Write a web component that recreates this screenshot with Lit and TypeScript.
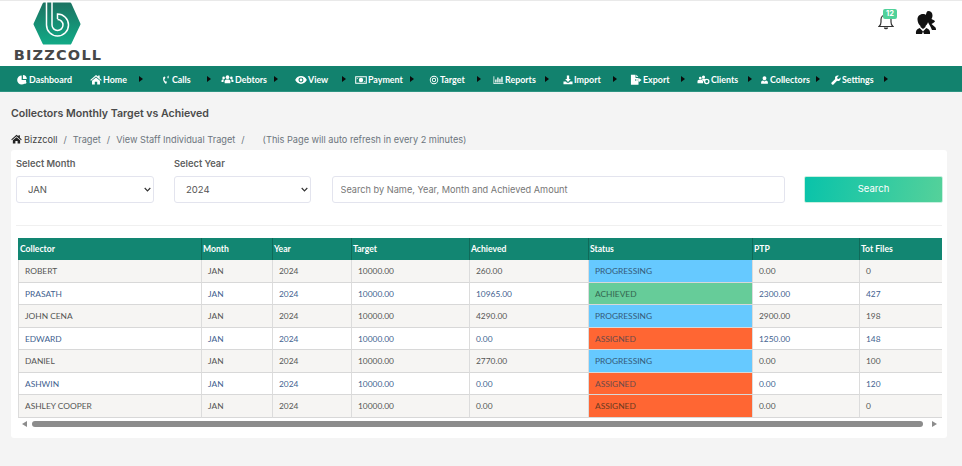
import { LitElement, html, css, svg } from "lit";
import { customElement } from "lit/decorators.js";

const icons: Record<string, unknown> = {
  dashboard: svg`<path d="M5.500 1.200A5.300 5.300 0 1 0 10.800 6.500H5.500Z"/><path d="M7 .6a5 5 0 0 1 4.600 4.600H7Z"/><circle cx="9.500" cy="9.400" r="1.600"/>`,
  home: svg`<path d="M6.500 1 .3 6.400l.8.9L6.500 2.700l5.400 4.600.8-.9-2.200-1.900V1.600H8.800v1.200Z"/><path d="M2.200 7.400 6.500 3.800l4.300 3.600v3.900H7.800V8.400H5.200v2.900h-3Z"/>`,
  phone: svg`<path d="M3.600 1.400 1.800 2.600C.9 5.600 2.400 9.600 4.900 11.800l1.800-.6.2-2.400-1.700-.6-.7.6c-.7-1-1.100-2.400-1.100-3.600l.9-.4L4.900 2.400Z"/><path d="M7.200 1.200h.8v2.600h-.8zM9 .4h.9v3.400H9z"/>`,
  users: svg`<circle cx="6.500" cy="3.400" r="2"/><circle cx="2.300" cy="4.200" r="1.400"/><circle cx="10.700" cy="4.200" r="1.400"/><path d="M3.400 10V7.800c0-1.200 1-1.800 3.100-1.800s3.100.6 3.100 1.800V10Z"/><path d="M0 8.600V7c0-.8.8-1.300 2.800-1.100-.4.5-.6 1.100-.6 1.900v.8ZM13 8.600V7c0-.8-.8-1.300-2.800-1.100.4.5.6 1.100.6 1.900v.8Z"/>`,
  eye: svg`<path fill-rule="evenodd" d="M6.500 2.300C3.700 2.300 1.400 4 .2 6.500c1.200 2.500 3.500 4.200 6.300 4.200s5.100-1.700 6.300-4.200C11.600 4 9.300 2.300 6.500 2.300ZM6.500 3.800a2.700 2.700 0 1 1 0 5.400 2.700 2.700 0 0 1 0-5.400Z"/><circle cx="6.500" cy="6.500" r="1.500"/>`,
  money: svg`<path fill-rule="evenodd" d="M.2 2.400h12.600v8.200H.2ZM1.300 3.500v6h10.400v-6ZM6.500 4.100a2.400 2.400 0 1 1 0 4.800 2.400 2.400 0 0 1 0-4.800ZM2 4.200h1.400L2 5.600ZM11 8.800H9.600L11 7.400Z"/>`,
  target: svg`<path fill-rule="evenodd" d="M6.500 1a5.500 5.500 0 1 1 0 11 5.500 5.500 0 0 1 0-11Zm0 1.200a4.300 4.300 0 1 0 0 8.600 4.300 4.300 0 0 0 0-8.600Zm0 1.500a2.800 2.800 0 1 1 0 5.600 2.800 2.800 0 0 1 0-5.600Zm0 1.200a1.600 1.600 0 1 0 0 3.200 1.600 1.600 0 0 0 0-3.200Z"/>`,
  chart: svg`<path d="M.6 2h.9v8.300h11v.9H.6Z"/><path d="M2.600 6h1.600v3.600H2.600zM5 3.400h1.600v6.200H5zM7.400 5h1.600v4.600H7.400zM9.800 2.600h1.600v7H9.800z"/>`,
  download: svg`<path d="M5 .8h3v4.400h2.200L6.500 9 2.800 5.200H5Z"/><path d="M.6 8.600h3.200l1.400 1.400h2.600l1.400-1.400h3.200v3.400H.6Z"/>`,
  export: svg`<path d="M1 .8h5v3.400h3.200v1.600H5.600v1.600h3.600v4.200H1Z"/><path d="M6.800.9 9.100 3.300H6.800Z"/><path d="M9.400 4.200l3.200 2.400-3.200 2.400V7.400H6.400V5.800h3Z"/>`,
  clients: svg`<circle cx="3" cy="4.400" r="1.500"/><circle cx="6.500" cy="3.200" r="1.700"/><path d="M0 10V7.600C0 6.600 1.200 6.200 3 6.200s3 .5 3 1.400V10Z"/><path d="M4 5.600c.4-.4 1.300-.7 2.500-.7s2.200.3 2.800.8c-1 .5-1.600 1.400-1.600 2.400H6.600C6.400 7 5.400 6 4 5.600Z"/><path fill-rule="evenodd" d="M10 5.200a3 3 0 1 1 0 6 3 3 0 0 1 0-6Zm0 1.400a1.600 1.600 0 1 0 0 3.200 1.600 1.600 0 0 0 0-3.200Z"/>`,
  user: svg`<path d="M6.500 1C4.900 1 3.800 2.200 3.800 3.900S4.900 7 6.500 7s2.700-1.400 2.700-3.100S8.100 1 6.500 1Z"/><path d="M1.600 12V9.600c0-1 .9-1.800 2.800-2.300l2.100 1.300 2.100-1.300c1.900.5 2.800 1.300 2.800 2.300V12Z"/>`,
  wrench: svg`<path d="M12.400 3.100 10.100 5.300 8.400 4.900 7.900 3.200 10.200.9C8.600.2 6.900.6 6 1.700 5.100 2.800 5 4.100 5.500 5.200L.8 9.900a1.300 1.300 0 0 0 0 1.800l.6.600a1.300 1.300 0 0 0 1.800 0L7.900 7.600C9 8 10.300 7.900 11.300 7 12.400 6 12.900 4.500 12.400 3.100Z"/>`,
};

const navItems = [
  { icon: "dashboard", label: "Dashboard", w: 55, mr: 18, iw: 11, arrow: false },
  { icon: "home", label: "Home", w: 53, mr: 19, iw: 12, arrow: true },
  { icon: "phone", label: "Calls", w: 49, mr: 10, iw: 9, arrow: true },
  { icon: "users", label: "Debtors", w: 57, mr: 17, iw: 13, arrow: true },
  { icon: "eye", label: "View", w: 51, mr: 9, iw: 12, arrow: true },
  { icon: "money", label: "Payment", w: 59, mr: 15, iw: 12, arrow: true },
  { icon: "target", label: "Target", w: 52, mr: 12, iw: 10, arrow: true },
  { icon: "chart", label: "Reports", w: 56, mr: 14, iw: 11, arrow: true },
  { icon: "download", label: "Import", w: 54, mr: 13, iw: 10, arrow: true },
  { icon: "export", label: "Export", w: 55, mr: 12, iw: 12, arrow: true },
  { icon: "clients", label: "Clients", w: 55, mr: 8, iw: 13, arrow: true },
  { icon: "user", label: "Collectors", w: 60, mr: 11, iw: 9, arrow: true },
  { icon: "wrench", label: "Settings", w: 57, mr: 0, iw: 10, arrow: true },
];

const rows = [
  ["ROBERT", "260.00", "PROGRESSING", "0.00", "0"],
  ["PRASATH", "10965.00", "ACHIEVED", "2300.00", "427"],
  ["JOHN CENA", "4290.00", "PROGRESSING", "2900.00", "198"],
  ["EDWARD", "0.00", "ASSIGNED", "1250.00", "148"],
  ["DANIEL", "2770.00", "PROGRESSING", "0.00", "100"],
  ["ASHWIN", "0.00", "ASSIGNED", "0.00", "120"],
  ["ASHLEY COOPER", "0.00", "ASSIGNED", "0.00", "0"],
];

const colWidths = [184, 71, 79, 118, 119, 164, 107, 131];

@customElement("app-root")
export class AppRoot extends LitElement {
  static styles = css`
    :host { display: block; height: 466px; overflow: hidden; background: #f4f4f4; font-family: "Inter", "Open Sans", sans-serif; color: #444; }
    .top { height: 65px; background: #fff; border-top: 1px solid #e9e9e9; display: flex; justify-content: space-between; box-sizing: content-box; }
    .logo { margin-left: 14px; width: 90px; display: flex; flex-direction: column; align-items: center; }
    .logo svg { display: block; margin: 0 0 0 -5px; }
    .logo span { font: 700 14.5px/14px "DejaVu Sans", sans-serif; letter-spacing: 1.2px; color: #484848; margin: 2px 0 0 -2px; white-space: nowrap; }
    .tools { display: flex; align-items: flex-start; margin-right: 25px; padding-top: 9px; }
    .bell { position: relative; width: 18px; height: 20px; margin: 2px 19px 0 0; }
    .bell svg { display: block; }
    .badge { position: absolute; left: 5px; top: -3px; width: 14px; height: 10px; border-radius: 2px; background: #50d19a; color: #fff; font: 700 7.5px/10px "Inter", sans-serif; text-align: center; }
    .nav { height: 26px; box-sizing: border-box; padding: 2px 0 0 17px; background: #12826e; display: flex; align-items: center; box-shadow: inset 0 -1px 0 #2d9482; }
    .item { display: flex; align-items: center; color: #fff; font: 700 8.900px/12px "Lato", sans-serif; white-space: nowrap; flex: none; }
    .item svg.ic { height: 12px; fill: #fff; margin-right: 1px; flex: none; }
    .item .arrow { margin-left: auto; width: 0; height: 0; border-left: 4px solid #0b0b0b; border-top: 3.500px solid transparent; border-bottom: 3.500px solid transparent; margin-top: -2px; }
    h1 { margin: 0; padding: 15px 0 0 11px; font: 600 10.600px/14px "Inter", sans-serif; color: #4a4a4a; }
    .crumbs { display: flex; align-items: center; padding: 12px 0 0 11px; font: 400 9.200px/13px "Inter", sans-serif; color: #6c757d; white-space: nowrap; }
    .crumbs svg { width: 11px; height: 11px; fill: #222; margin-right: 2px; }
    .crumbs .root { color: #444; }
    .crumbs .sep { margin: 0 6px; }
    .crumbs .note { margin-left: 12px; }
    .card { margin: 4px 15px 0 11px; height: 288px; box-sizing: border-box; background: #fff; border-radius: 3px; padding: 7px 5px 0 5px; }
    .filters { display: grid; grid-template-columns: 138px 137px 453px 139px; column-gap: 20px; align-items: end; }
    label { display: block; font: 600 9.300px/13px "Inter", sans-serif; color: #5f5f5f; margin-bottom: 6px; }
    select, input { width: 100%; height: 27px; box-sizing: border-box; border: 1px solid #e3e4ee; border-radius: 3px; background: #fff; font: 400 9.500px "Inter", sans-serif; color: #555; outline: none; }
    select { appearance: none; padding-left: 11px; background: #fff url("data:image/svg+xml,%3Csvg xmlns='http://www.w3.org/2000/svg' width='7' height='5' viewBox='0 0 7 5'%3E%3Cpath d='M.7 1l2.800 2.800L6.300 1' fill='none' stroke='%23333' stroke-width='1.200'/%3E%3C/svg%3E") no-repeat right 2px center; }
    input { padding: 0 7.500px; margin-left: 1px; width: 452.500px; font-size: 9.200px; }
    input::placeholder { color: #777; opacity: 1; }
    button { height: 27px; border: 1px solid #c8f0df; border-radius: 2px; background: linear-gradient(100deg, #09c3aa, #55d19a); color: #fff; font: 400 9.500px "Inter", sans-serif; padding: 0 0 2px; }
    hr { border: 0; height: 1px; background: #f0f0f0; margin: 22px 0 12px; }
    .scroll { margin-left: 2px; width: 924px; overflow: hidden; }
    table { border-collapse: separate; border-spacing: 0; table-layout: fixed; width: 973px; font: 400 8.400px/12px "Lato", sans-serif; }
    th { height: 22px; padding: 0 0 0 1px; background: #128672; color: #fff; font-weight: 700; font-size: 8.600px; text-align: left; border-right: 1px solid #0f6a59; box-sizing: border-box; }
    th:first-child { padding-left: 2px; }
    td { height: 22.570px; padding: 0.500px 0 0 6px; border-right: 1px solid #dcdcdc; border-bottom: 1px solid #d8d8d8; box-sizing: border-box; color: #3f5f8f; background: #fff; }
    tr:nth-child(odd) td { background: #f6f5f3; color: #555; }
    td:first-child { border-left: 1px solid #dcdcdc; }
    tr td.PROGRESSING, tr:nth-child(odd) td.PROGRESSING { background: #66c9ff; color: #355a78; }
    tr td.ACHIEVED { background: #66cc99; color: #33664f; }
    tr td.ASSIGNED { background: #ff6633; color: #6b4a4a; }
    tr:nth-child(odd) td.ASSIGNED { background: #ff6633; color: #6a3a20; }
    .bar { width: 924px; margin: 2px 0 0 2px; height: 8px; display: flex; align-items: center; gap: 5px; padding: 0 5px 0 4px; box-sizing: border-box; }
    .tri-l { width: 0; height: 0; border-right: 5px solid #8c8c8c; border-top: 3.500px solid transparent; border-bottom: 3.500px solid transparent; }
    .tri-r { width: 0; height: 0; border-left: 5px solid #8c8c8c; border-top: 3.500px solid transparent; border-bottom: 3.500px solid transparent; margin-left: 4px; }
    .thumb { flex: 1; height: 6.500px; background: #8c8c8c; border-radius: 4px; }
  `;

  render() {
    return html`
      <header class="top">
        <div class="logo">
          <svg width="50" height="45" viewBox="0 0 50 45">
            <defs><linearGradient id="lg" x1="0" y1="0" x2="0" y2="1"><stop offset="0" stop-color="#1b7563"/><stop offset="1" stop-color="#12a885"/></linearGradient></defs>
            <path d="M12 3H38L47 23 38 42H12L3 23Z" fill="url(#lg)" stroke="url(#lg)" stroke-width="3" stroke-linejoin="round"/>
            <g fill="none" stroke="#fff" stroke-width="1.500">
              <path d="M14.500 0V24A11 11 0 1 0 25.500 13V18"/>
              <path d="M20 0V24A5.500 5.500 0 1 0 25.500 18.500"/>
            </g>
          </svg>
          <span>BIZZCOLL</span>
        </div>
        <div class="tools">
          <div class="bell">
            <svg width="16" height="18" viewBox="0 0 16 18" fill="none" stroke="#333" stroke-width="1.200"><path d="M1 14.500c1.500-1 2-2 2-4.500V7.500C3 4.800 5 3 8 3s5 1.800 5 4.500V10c0 2.500.5 3.500 2 4.500Z"/><path d="M6.500 15.500c.4 1.400 2.600 1.400 3 0" stroke-width="1.500"/></svg>
            <div class="badge">12</div>
          </div>
          <svg width="22" height="24" viewBox="0 0 22 24" fill="#111">
            <path d="M13 1c3 0 4.500 2 4.500 4.500 0 1.500-.5 2.500-1 3.500 1 .6 3 1 3.500 2.500-1 1-2.500 2-3.500 2.500l4 3.500c.5 1 .5 2 .5 2.500h-4C15.500 16 12 11 11 8c-.5-3 .5-7 2-7Z"/>
            <path d="M8 4c3.300 0 5.500 2.300 5.500 5.500 0 2.500-1.300 5-3 6.500V17l-2.500 2-2.500-2v-1C3.800 14.500 2.500 12 2.500 9.500 2.500 6.300 4.700 4 8 4Z"/>
            <path d="M1 24c-.5-3 .5-5 3.700-6l3.300 3.500L11.300 18c3 1 4.200 3 3.700 6H9l-1-2.500L7 24Z"/>
          </svg>
        </div>
      </header>
      <nav class="nav">
        ${navItems.map(
          (n) => html`<div class="item" style="width:${n.w}px;margin-right:${n.mr}px">
            <svg class="ic" style="width:${n.iw}px" viewBox="0 0 13 13">${icons[n.icon]}</svg>${n.label}${n.arrow ? html`<span class="arrow"></span>` : ""}
          </div>`
        )}
      </nav>
      <h1>Collectors Monthly Target vs Achieved</h1>
      <div class="crumbs">
        <svg viewBox="0 0 13 13">${icons.home}</svg><span class="root">Bizzcoll</span><span class="sep">/</span><span>Traget</span><span class="sep">/</span><span>View Staff Individual Traget</span><span class="sep">/</span><span class="note">(This Page will auto refresh in every 2 minutes)</span>
      </div>
      <section class="card">
        <div class="filters">
          <div><label>Select Month</label><select><option>JAN</option><option>FEB</option></select></div>
          <div><label>Select Year</label><select><option>2024</option><option>2023</option></select></div>
          <input placeholder="Search by Name, Year, Month and Achieved Amount" />
          <button>Search</button>
        </div>
        <hr />
        <div class="scroll">
          <table>
            <colgroup>${colWidths.map((w) => html`<col style="width:${w}px" />`)}</colgroup>
            <thead><tr>${["Collector", "Month", "Year", "Target", "Achieved", "Status", "PTP", "Tot Files"].map((h) => html`<th>${h}</th>`)}</tr></thead>
            <tbody>
              ${rows.map(
                (r) => html`<tr><td>${r[0]}</td><td>JAN</td><td>2024</td><td>10000.00</td><td>${r[1]}</td><td class=${r[2]}>${r[2]}</td><td>${r[3]}</td><td>${r[4]}</td></tr>`
              )}
            </tbody>
          </table>
        </div>
        <div class="bar"><span class="tri-l"></span><span class="thumb"></span><span class="tri-r"></span></div>
      </section>
    `;
  }
}
